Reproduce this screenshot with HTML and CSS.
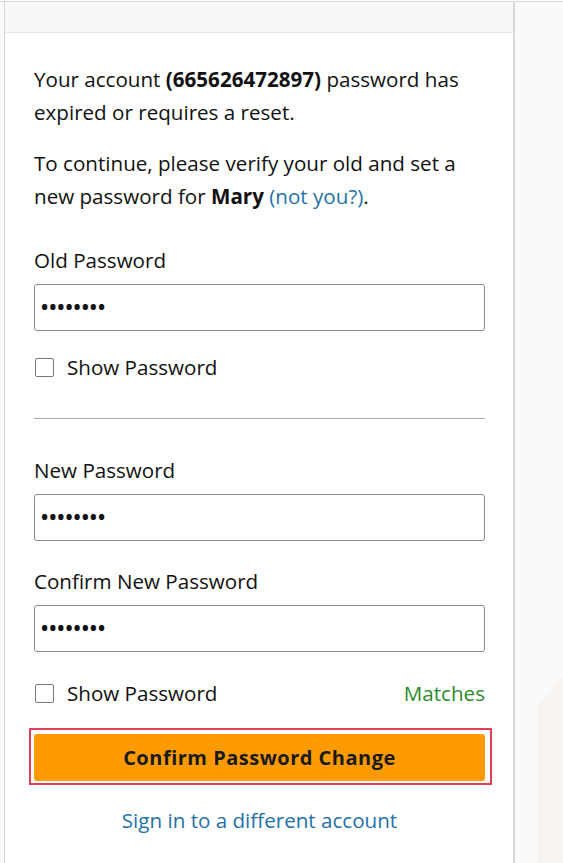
FILE: index.html
```html
<!DOCTYPE html>
<html lang="en">
<head>
<meta charset="utf-8">
<title>Change Password</title>
<link rel="stylesheet" href="styles.css">
</head>
<body>
<div class="page">
  <div class="card">
    <div class="card-head"></div>
    <div class="card-body">
      <p class="para">Your account <b>(665626472897)</b> password has expired or requires a reset.</p>
      <p class="para">To continue, please verify your old and set a new password for <b>Mary</b> <a class="link" href="#">(not you?)</a>.</p>

      <label class="label label-1">Old Password</label>
      <div class="field">••••••••</div>
      <div class="check-row check-row-1">
        <span class="check"><span class="box"></span>Show Password</span>
      </div>

      <hr class="divider">

      <label class="label">New Password</label>
      <div class="field">••••••••</div>
      <label class="label label-2">Confirm New Password</label>
      <div class="field">••••••••</div>
      <div class="check-row check-row-2">
        <span class="check"><span class="box"></span>Show Password</span>
        <span class="matches">Matches</span>
      </div>

      <div class="btn-wrap">
        <button class="btn">Confirm Password Change</button>
        <span class="highlight"></span>
      </div>

      <div class="alt"><a class="link" href="#">Sign in to a different account</a></div>
    </div>
  </div>
  <div class="side">
    <span class="shape"></span>
  </div>
</div>
</body>
</html>
```

FILE: styles.css
```css
* { box-sizing: border-box; }
html, body { margin: 0; padding: 0; }
body {
  background: #fafafa;
  font-family: "Open Sans", "Noto Sans", sans-serif;
  color: #111;
  height: 863px;
  overflow: hidden;
}
.page {
  display: flex;
  border-top: 1px solid #dcdcdc;
  margin-top: 1px;
  height: 862px;
}
.card {
  margin-left: 4px;
  width: 511px;
  flex: none;
  background: #fff;
  border-left: 1px solid #d6d6d6;
  border-right: 2px solid #d8d8d8;
  display: flex;
  flex-direction: column;
}
.card-head {
  height: 31px;
  background: #f8f8f8;
  border-bottom: 1px solid #e6e6e6;
}
.card-body {
  padding: 30px 28px 0 29px;
}
.para {
  margin: 0 0 18px;
  font-size: 20.6px;
  line-height: 33px;
}
.para b { font-weight: 700; }
.link { color: #1f72a9; text-decoration: none; }
.label {
  display: block;
  font-size: 20.6px;
  line-height: 26px;
  margin-top: 19px;
  margin-bottom: 11px;
}
.label-1 { margin-top: 34px; }
.label-2 { margin-top: 27px; }
.field {
  height: 47px;
  border: 1px solid #8a8a8a;
  border-radius: 3px;
  padding: 0 0 0 6px;
  font-size: 19px;
  font-weight: 700;
  letter-spacing: 1px;
  line-height: 45px;
  color: #111;
}
.check-row {
  display: flex;
  justify-content: space-between;
  align-items: center;
  margin-top: 26px;
  height: 26px;
  font-size: 20.6px;
}
.check-row-1 { margin-top: 23px; }
.check-row-2 { margin-top: 28px; }
.check { display: flex; align-items: center; }
.box {
  width: 19px;
  height: 19px;
  border: 1px solid #777;
  border-radius: 2px;
  margin: 0 13px 0 1px;
  background: #fff;
}
.matches { color: #2d8a2a; }
.divider {
  border: 0;
  border-top: 1px solid #a6a6a6;
  margin: 38px 0 38px;
}
.btn-wrap {
  position: relative;
  margin-top: 28px;
}
.btn {
  display: block;
  width: 100%;
  height: 47px;
  border: 0;
  border-radius: 3px;
  background: #ff9a00;
  color: #1a1a1a;
  font-family: "Open Sans", "Noto Sans", sans-serif;
  font-weight: 700;
  font-size: 20px;
  letter-spacing: 0.5px;
}
.highlight {
  position: absolute;
  left: -5px;
  right: -7px;
  top: -6px;
  bottom: -4px;
  border: 2px solid #e0405a;
  pointer-events: none;
}
.alt {
  text-align: center;
  font-size: 20.6px;
  line-height: 26px;
  margin-top: 26px;
}
.side {
  flex: 1;
  position: relative;
  overflow: hidden;
  background: #fafafa;
}
.shape {
  position: absolute;
  left: 22px;
  top: 675px;
  width: 60px;
  height: 200px;
  background: #f8f4f1;
  clip-path: polygon(40% 0, 100% 10%, 100% 100%, 0 100%, 0 15%);
}
```
